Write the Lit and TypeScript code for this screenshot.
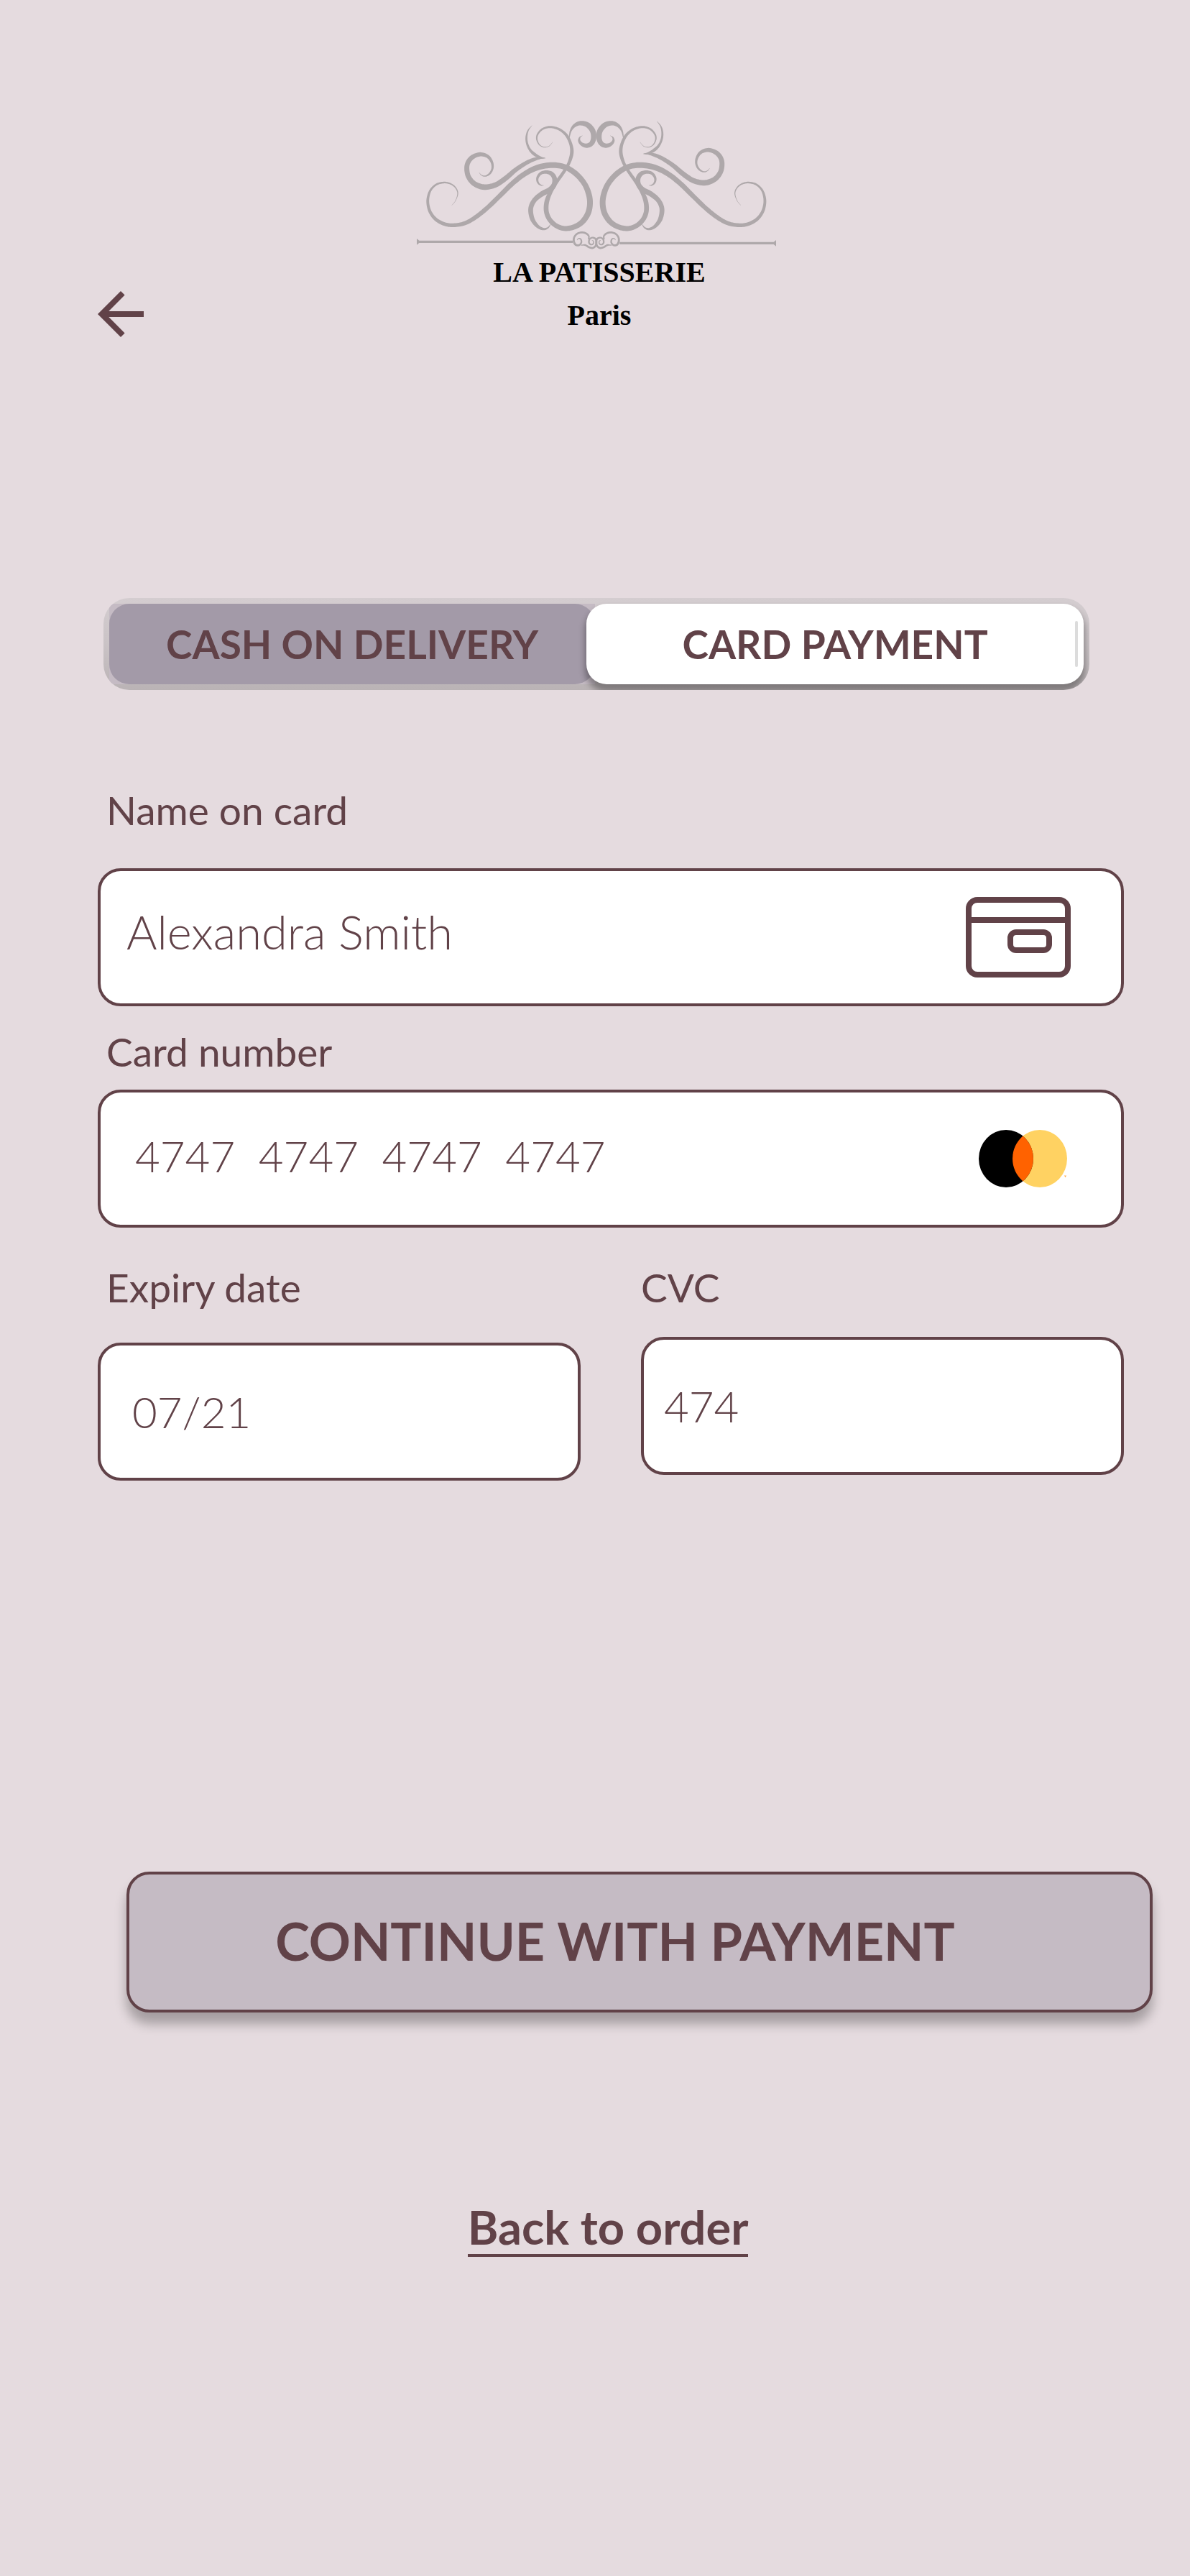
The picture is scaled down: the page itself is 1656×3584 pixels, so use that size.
import { LitElement, html, svg, css, nothing } from "lit";
import { customElement, property, state } from "lit/decorators.js";
import { classMap } from "lit/directives/class-map.js";

/** A point on the centre line of a pen stroke: x, y and pen width. */
type Knot = [number, number, number];

/** Outlines a stroke whose width swells and thins along a smooth curve. */
function brush(knots: Knot[]): string {
  const pts: number[][] = [];
  for (let i = 0; i < knots.length - 1; i++) {
    const p0 = knots[Math.max(i - 1, 0)];
    const p1 = knots[i];
    const p2 = knots[i + 1];
    const p3 = knots[Math.min(i + 2, knots.length - 1)];
    for (let s = 0; s < 8; s++) {
      const t = s / 8;
      pts.push(
        [0, 1, 2].map(
          (k) =>
            0.5 *
            (2 * p1[k] +
              (p2[k] - p0[k]) * t +
              (2 * p0[k] - 5 * p1[k] + 4 * p2[k] - p3[k]) * t * t +
              (3 * p1[k] - p0[k] - 3 * p2[k] + p3[k]) * t * t * t),
        ),
      );
    }
  }
  pts.push([...knots[knots.length - 1]]);
  const left: string[] = [];
  const right: string[] = [];
  pts.forEach(([x, y, w], i) => {
    const a = pts[Math.max(i - 1, 0)];
    const b = pts[Math.min(i + 1, pts.length - 1)];
    const dx = b[0] - a[0];
    const dy = b[1] - a[1];
    const len = Math.hypot(dx, dy) || 1;
    const nx = (-dy / len) * (w / 2);
    const ny = (dx / len) * (w / 2);
    left.push(`${(x + nx).toFixed(1)} ${(y + ny).toFixed(1)}`);
    right.unshift(`${(x - nx).toFixed(1)} ${(y - ny).toFixed(1)}`);
  });
  return `M${left.concat(right).join("L")}Z`;
}

const SWIRL: Knot[] = [
  [176, 377, 1], [192, 357, 2], [201, 326, 4], [190, 301, 5], [168, 286, 6], [142, 282, 7],
  [112, 290, 8], [88, 313, 9], [77, 345, 11], [77, 375, 12], [87, 407, 13], [110, 436, 14],
  [145, 455, 15], [183, 460, 16], [230, 452, 17], [275, 427, 18], [325, 387, 19], [380, 334, 20],
  [430, 285, 21], [480, 246, 22], [535, 219, 23], [595, 209, 24], [650, 218, 23], [695, 246, 23],
  [730, 287, 23], [748, 330, 24], [753, 370, 24], [745, 410, 24], [722, 445, 23], [690, 466, 22],
  [650, 474, 21], [615, 464, 20], [588, 441, 20], [573, 412, 20], [570, 382, 20], [576, 350, 19],
  [592, 315, 16], [615, 278, 14], [642, 240, 13], [664, 203, 13], [677, 160, 15], [673, 122, 13],
  [655, 85, 12], [625, 60, 10], [588, 50, 9], [556, 58, 8], [536, 78, 7], [531, 100, 6],
  [541, 123, 4], [560, 134, 3], [582, 130, 2], [597, 113, 1],
];
const BRANCH: Knot[] = [
  [290, 240, 1], [300, 251, 3], [316, 255, 5], [335, 244, 8], [346, 222, 9], [343, 196, 11],
  [326, 173, 14], [295, 164, 17], [262, 176, 19], [243, 200, 20], [239, 228, 21], [247, 260, 21],
  [272, 288, 22], [312, 301, 23], [358, 292, 22], [400, 265, 21], [440, 231, 19], [480, 204, 17],
  [515, 187, 15], [545, 180, 8], [567, 180, 1],
];
const HORN: Knot[] = [
  [511, 44, 1], [495, 64, 5], [488, 90, 8], [490, 117, 9], [501, 143, 10], [520, 163, 13],
  [545, 177, 9], [567, 180, 1],
];
const CREST: Knot[] = [
  [666, 97, 3], [673, 65, 8], [690, 43, 14], [716, 34, 19], [745, 43, 22], [765, 68, 23],
  [768, 98, 22], [758, 120, 20], [738, 128, 18], [718, 121, 14], [708, 107, 10], [711, 93, 5],
  [722, 86, 1],
];
const LEAF: Knot[] = [
  [560, 294, 1], [546, 292, 5], [535, 280, 8], [534, 262, 10], [547, 244, 12], [569, 238, 14],
  [592, 245, 18], [605, 265, 20], [603, 291, 21], [585, 312, 22], [553, 329, 22], [524, 352, 20],
  [508, 380, 20], [506, 408, 20], [515, 440, 18], [535, 465, 14], [558, 476, 10], [577, 471, 6],
  [588, 457, 2],
];
const KNOT_OUTER: Knot[] = [
  [747, 519, 6], [748, 505, 7], [736, 494, 8], [718, 490, 8], [699, 496, 8], [687, 511, 8],
  [686, 529, 9], [694, 542, 9], [708, 543, 8], [717, 532, 7], [715, 519, 6], [706, 515, 4],
  [699, 522, 2],
];
const KNOT_INNER: Knot[] = [
  [715, 544, 3], [733, 543, 7], [749, 552, 8], [765, 555, 8], [777, 545, 8], [780, 528, 8],
  [775, 516, 8], [762, 512, 7], [751, 519, 7], [749, 533, 7], [757, 541, 6], [767, 537, 5],
  [767, 526, 4], [761, 524, 2],
];

@customElement("brand-mark")
export class BrandMark extends LitElement {
  static styles = css`
    :host {
      display: flex;
      flex-direction: column;
      align-items: center;
    }
    .ornament {
      display: block;
      width: 508px;
      height: 189px;
      fill: #aea8aa;
    }
    .wordmark {
      margin: 0;
      padding-left: 12px;
      font: 700 40px/60px "Liberation Serif", serif;
      color: #000;
      text-align: center;
    }
    .city {
      display: block;
    }
  `;

  render() {
    const body = () => [SWIRL, CREST, LEAF, KNOT_OUTER, KNOT_INNER].map((k) => svg`<path d=${brush(k)} />`);
    const wing = () => [BRANCH, HORN].map((k) => svg`<path d=${brush(k)} />`);
    return html`
      <svg class="ornament" viewBox="12 0 1524 567" aria-hidden="true">
        ${body()}${wing()}
        <g transform="matrix(-1 0 0 1 1559 0)">${body()}</g>
        <g transform="matrix(-1 0 0 1 1543 -18)">${wing()}</g>
        <path d="M30 516 L40 524 H681 V534 H40 L30 542Z" />
        <path d="M1530 522 L1520 530 H877 V540 H1520 L1530 548Z" />
      </svg>
      <h1 class="wordmark">LA PATISSERIE<span class="city">Paris</span></h1>
    `;
  }
}

@customElement("app-root")
export class AppRoot extends LitElement {
  @property() name = "Alexandra Smith";
  @state() private method: "cash" | "card" = "card";

  static styles = css`
    :host {
      display: block;
      box-sizing: border-box;
      min-height: 100vh;
      padding: 160px 92px 160px 136px;
      background: #e5dbdf;
      color: #614248;
      font-family: Lato, "Liberation Sans", sans-serif;
    }
    * {
      box-sizing: border-box;
    }
    button,
    input {
      margin: 0;
      font-family: inherit;
      color: inherit;
    }
    .top {
      display: grid;
      grid-template-columns: 1fr auto 1fr;
      align-items: end;
      padding-right: 44px;
    }
    .back {
      width: 64px;
      height: 64px;
      padding: 0;
      border: 0;
      background: none;
      cursor: pointer;
    }
    .icon {
      display: block;
      flex: none;
    }
    .methods {
      display: grid;
      grid-template-columns: 24fr 25fr;
      margin: 363px 48px 0 8px;
      padding: 8px;
      border-radius: 36px;
      overflow: hidden;
      background: linear-gradient(#d4cdd0, #cac3c6 50%, #bab3b5);
    }
    .slot {
      display: flex;
      height: 112px;
    }
    .slot.under {
      margin-right: -12px;
      background: #c5bbc4;
    }
    .method {
      flex: 1;
      padding: 0;
      border: 0;
      border-radius: 28px;
      background: #a39aa8;
      font-size: 55px;
      font-weight: 700;
      line-height: 66px;
      cursor: pointer;
    }
    .slot.over {
      position: relative;
    }
    .slot.over .method {
      background: #fff;
      box-shadow: 0 8px 8px 2px rgba(0, 0, 0, 0.32);
    }
    .tick {
      position: absolute;
      right: 8px;
      top: 24px;
      width: 4px;
      height: 64px;
      border-radius: 2px;
      background: #dcdcdc;
    }
    .form {
      margin-top: 134px;
    }
    .label {
      display: block;
      padding-left: 12px;
      font-size: 55px;
      line-height: 66px;
    }
    .box {
      display: flex;
      align-items: center;
      gap: 32px;
      height: 192px;
      border: 4px solid #614248;
      border-radius: 32px;
      background: #fff;
    }
    .box.with-icon {
      padding-right: 70px;
    }
    .field {
      flex: 1;
      min-width: 0;
      height: 100%;
      padding: 0 0 0 44px;
      border: 0;
      border-radius: 28px;
      outline: none;
      background: none;
      font-size: 60px;
      font-weight: 300;
    }
    .field.holder {
      padding: 0 0 16px 36px;
      font-size: 65px;
    }
    .field.number {
      padding: 0 0 8px 48px;
    }
    .label.holder {
      margin-bottom: 48px;
    }
    .label.number {
      margin: 30px 0 20px;
    }
    .pair {
      display: grid;
      grid-template-columns: repeat(2, minmax(0, 1fr));
      gap: 84px;
      margin-top: 50px;
    }
    .label.expiry {
      margin-bottom: 44px;
    }
    .label.cvc {
      margin-bottom: 36px;
      padding-left: 0;
    }
    .field.cvc {
      padding-left: 28px;
    }
    .submit {
      display: block;
      width: 100%;
      height: 196px;
      margin: 544px 0 0 40px;
      padding: 0 68px 4px 0;
      border: 4px solid #614248;
      border-radius: 32px;
      background: #c5bbc4;
      box-shadow: 0 16px 16px rgba(0, 0, 0, 0.28);
      font-size: 72px;
      font-weight: 700;
      cursor: pointer;
    }
    .foot {
      display: flex;
      justify-content: center;
      margin-top: 260px;
      padding-right: 8px;
    }
    .order {
      border-bottom: 4px solid #614248;
      color: inherit;
      font-size: 65px;
      font-weight: 700;
      line-height: 76px;
      text-decoration: none;
    }
  `;

  private tab(id: "cash" | "card", text: string) {
    const on = this.method === id;
    return html`<div class=${classMap({ slot: true, over: on, under: !on })}>
      <button class="method" type="button" role="tab" aria-selected=${on} @click=${() => (this.method = id)}>
        ${text}
      </button>
      ${on ? html`<span class="tick"></span>` : nothing}
    </div>`;
  }

  render() {
    return html`
      <header class="top">
        <button class="back" type="button" aria-label="Back">
          <svg class="icon" width="64" height="64" viewBox="0 0 64 64" fill="#614248" aria-hidden="true">
            <path d="M0 32 L32 0 L37.600 5.600 L15.300 28 H64 V36 H15.300 L37.600 58.400 L32 64Z" />
          </svg>
        </button>
        <brand-mark></brand-mark>
      </header>

      <div class="methods" role="tablist">
        ${this.tab("cash", "CASH ON DELIVERY")} ${this.tab("card", "CARD PAYMENT")}
      </div>

      <form class="form" @submit=${(e: Event) => e.preventDefault()}>
        <label class="label holder" for="holder">Name on card</label>
        <div class="box with-icon">
          <input class="field holder" id="holder" type="text" .value=${this.name} />
          <svg class="icon" width="146" height="112" viewBox="0 0 146 112" fill="none" stroke="#614248" stroke-width="8" aria-hidden="true">
            <rect x="4" y="4" width="138" height="104" rx="12" />
            <path d="M4 32H142" />
            <rect x="62" y="49" width="54" height="25" rx="8" />
          </svg>
        </div>

        <label class="label number" for="number">Card number</label>
        <div class="box with-icon">
          <input class="field number" id="number" type="text" inputmode="numeric" .value=${"4747  4747  4747  4747"} />
          <svg class="icon" width="130" height="80" viewBox="0 0 130 80" aria-hidden="true">
            <ellipse cx="87" cy="40" rx="38" ry="40" fill="#ffd262" />
            <ellipse cx="40" cy="40" rx="38" ry="40" fill="#000" />
            <path d="M63.500 8.600 A38 40 0 0 1 63.500 71.400 A38 40 0 0 1 63.500 8.600Z" fill="#ff6200" />
            <path d="M121 64h3M122.500 64v2" stroke="#ffb35c" />
          </svg>
        </div>

        <div class="pair">
          <div>
            <label class="label expiry" for="expiry">Expiry date</label>
            <div class="box"><input class="field" id="expiry" type="text" .value=${"07/21"} /></div>
          </div>
          <div>
            <label class="label cvc" for="cvc">CVC</label>
            <div class="box"><input class="field cvc" id="cvc" type="text" inputmode="numeric" .value=${"474"} /></div>
          </div>
        </div>

        <button class="submit" type="submit">CONTINUE WITH PAYMENT</button>
      </form>

      <footer class="foot"><a class="order" href="#order">Back to order</a></footer>
    `;
  }
}
